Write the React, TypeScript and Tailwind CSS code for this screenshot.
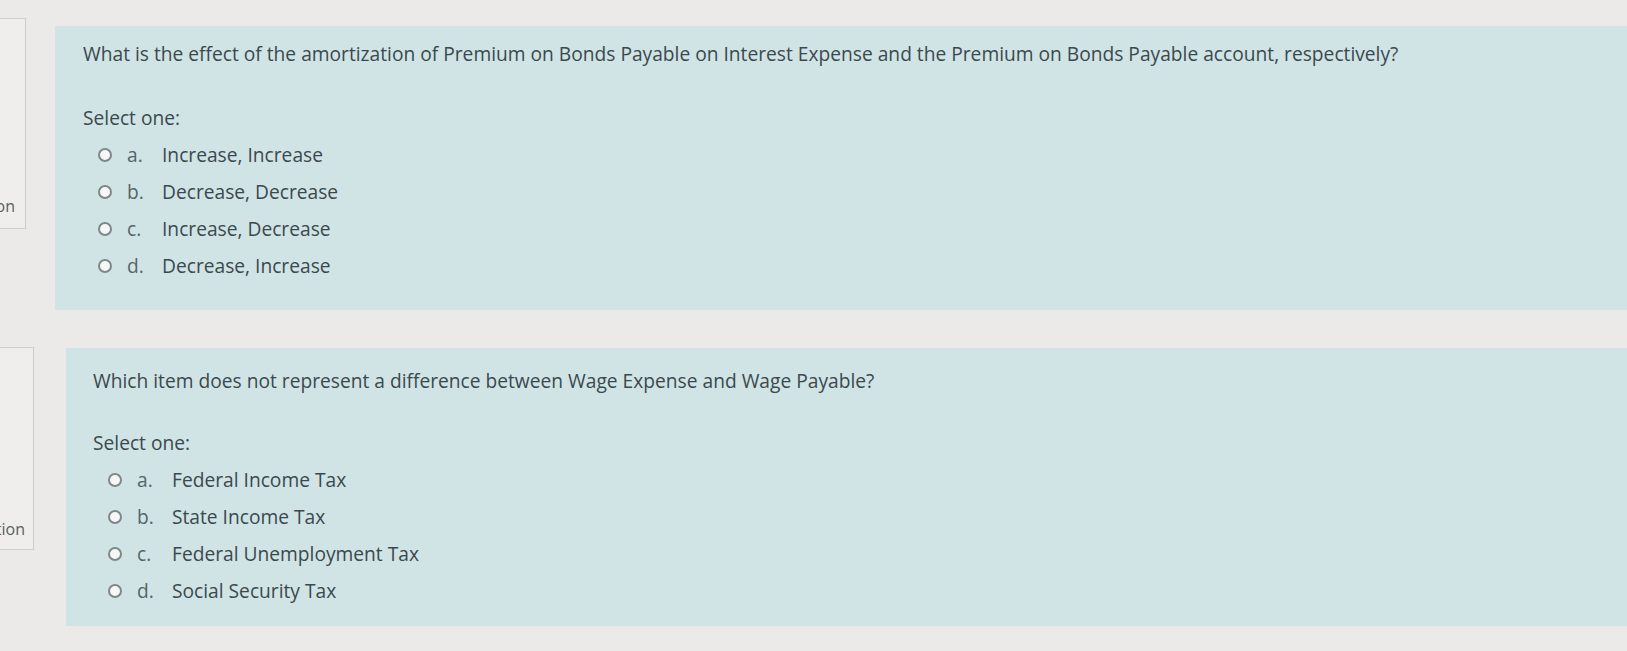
import React from "react";

type Q = {
  question: string;
  options: string[];
};

const q1: Q = {
  question:
    "What is the effect of the amortization of Premium on Bonds Payable on Interest Expense and the Premium on Bonds Payable account, respectively?",
  options: [
    "Increase, Increase",
    "Decrease, Decrease",
    "Increase, Decrease",
    "Decrease, Increase",
  ],
};

const q2: Q = {
  question:
    "Which item does not represent a difference between Wage Expense and Wage Payable?",
  options: [
    "Federal Income Tax",
    "State Income Tax",
    "Federal Unemployment Tax",
    "Social Security Tax",
  ],
};

const letters = ["a.", "b.", "c.", "d."];

function Radio() {
  return (
    <span className="block w-[14px] h-[14px] rounded-full border-2 border-[#7f8789] bg-[#f6f7f7] shrink-0" />
  );
}

function Options({ options }: { options: string[] }) {
  return (
    <div className="flex flex-col pl-[15px] gap-[13px]">
      {options.map((o, i) => (
        <div key={i} className="flex items-center h-[24px]">
          <Radio />
          <span className="ml-[15px] w-[35px] text-[#56656a]">{letters[i]}</span>
          <span>{o}</span>
        </div>
      ))}
    </div>
  );
}

export default function App() {
  return (
    <div
      className="w-[1627px] h-[651px] overflow-hidden bg-[#ebeae8] text-[#3b494e] text-[19.2px] leading-[24px]"
      style={{ fontFamily: '"Open Sans", "Noto Sans", sans-serif' }}
    >
      {/* Row 1 */}
      <div className="flex items-start pt-[18px]">
        <div className="w-[26px] h-[211px] border border-l-0 border-[#cfcecc] bg-[#efeeec] flex items-end justify-end overflow-hidden pr-[10px] pb-[10px]">
          <span className="whitespace-nowrap text-[16px] text-[#5b5f61]">Flag question</span>
        </div>
        <div className="ml-[29px] mt-[8px] flex-1 h-[284px] bg-[#d0e4e5] pl-[28px] pt-[16px]">
          <p>{q1.question}</p>
          <p className="mt-[40px] mb-[13px]">Select one:</p>
          <Options options={q1.options} />
        </div>
      </div>

      {/* Row 2 */}
      <div className="flex items-start pt-[37px]">
        <div className="w-[34px] h-[203px] border border-l-0 border-[#cfcecc] bg-[#efeeec] flex items-end justify-end overflow-hidden pr-[8px] pb-[8px]">
          <span className="whitespace-nowrap text-[16px] text-[#5b5f61]">Flag question</span>
        </div>
        <div className="ml-[32px] mt-[1px] flex-1 h-[278px] bg-[#d0e4e5] pl-[27px] pt-[21px]">
          <p>{q2.question}</p>
          <p className="mt-[38px] mb-[13px]">Select one:</p>
          <Options options={q2.options} />
        </div>
      </div>
    </div>
  );
}
